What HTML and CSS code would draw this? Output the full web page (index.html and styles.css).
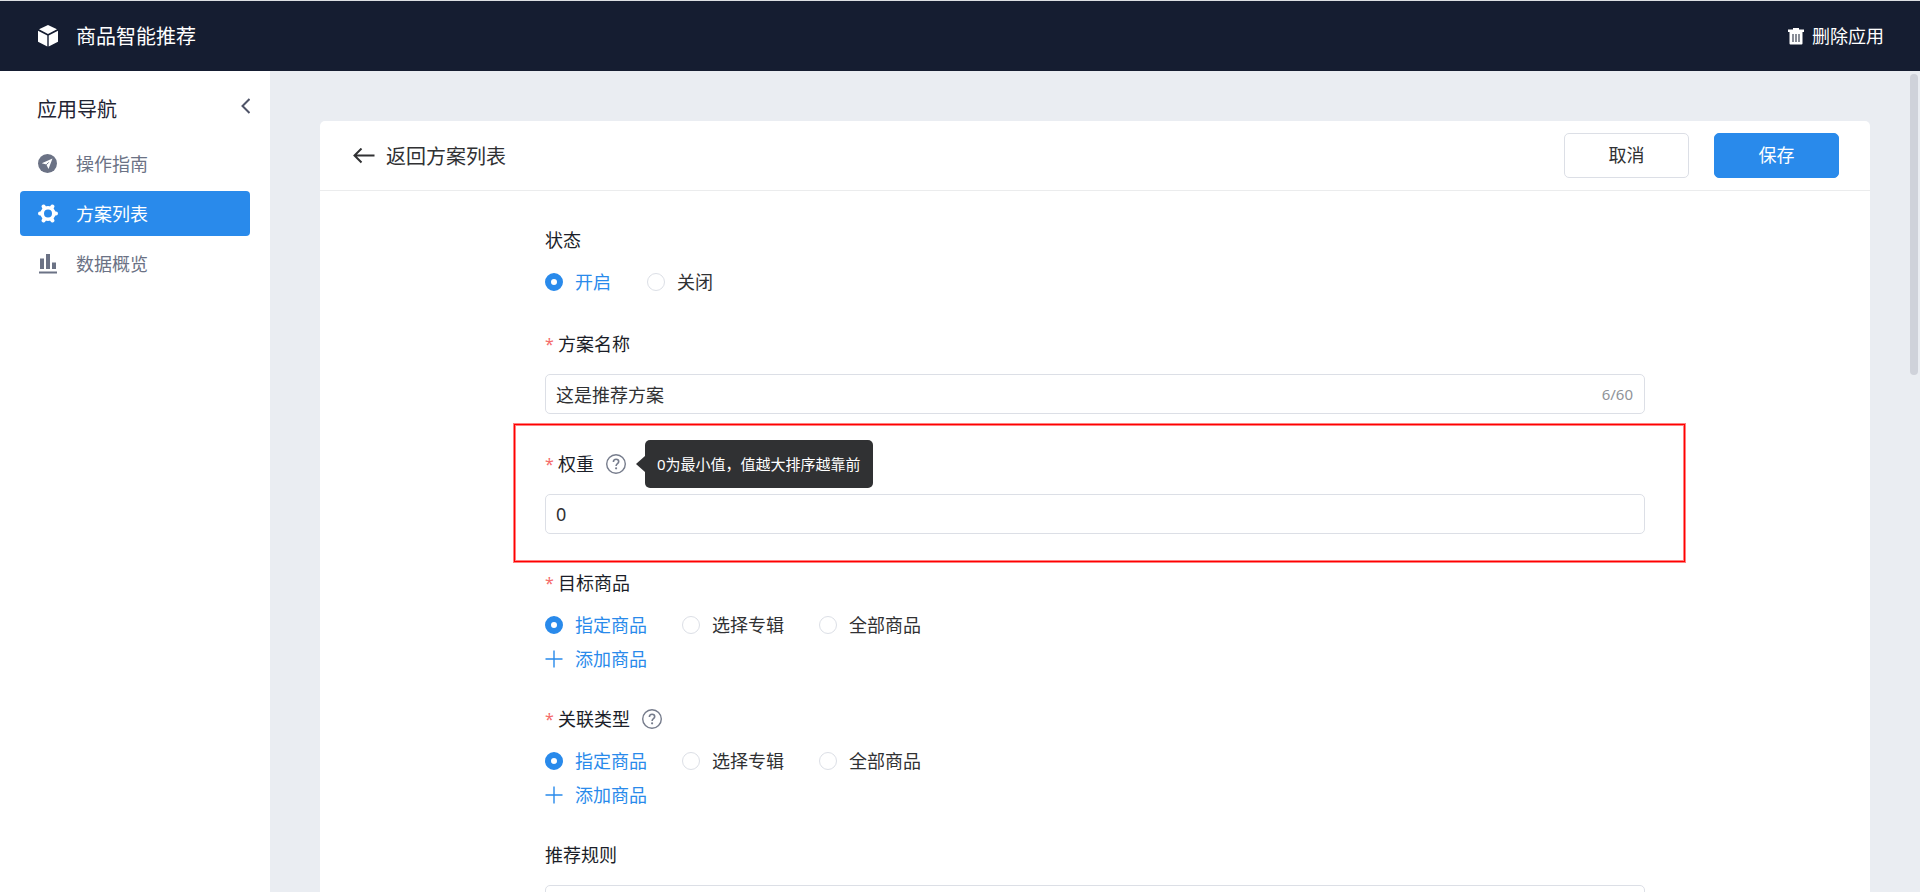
FILE: index.html
```html
<!DOCTYPE html>
<html lang="zh-CN">
<head>
<meta charset="utf-8">
<title>商品智能推荐</title>
<link rel="stylesheet" href="styles.css">
</head>
<body>
<header class="topbar">
  <div class="brand">
    <svg class="icon" viewBox="0 0 20 22" aria-hidden="true"><path fill="#fff" d="M10 0 19 4.200 10 9 1 4.200zM0 5.800 9.300 10.600V21.500L0 16.800zM20 5.800 10.700 10.600V21.500L20 16.800z"/></svg>
    <h1 class="brand-name">商品智能推荐</h1>
  </div>
  <button class="delete" type="button">
    <svg class="trash" viewBox="0 0 16 17" aria-hidden="true"><path fill="#fff" fill-rule="evenodd" d="M5 0h6v1.500h5V4h-1.500v11.500a1 1 0 0 1-1 1h-11a1 1 0 0 1-1-1V4H0V1.500h5zM4.500 6v8h1V6zM7.500 6v8h1V6zM10.500 6v8h1V6z"/></svg>
    删除应用
  </button>
</header>
<div class="shell">
  <aside class="sidebar">
    <div class="sidebar-head">
      <h2 class="sidebar-title">应用导航</h2>
      <button class="collapse" type="button" aria-label="收起导航">
        <svg class="chevron" viewBox="0 0 10 16" aria-hidden="true"><path d="M9.500 1 2.500 8l7 7" fill="none" stroke="#4f5468" stroke-width="2"/></svg>
      </button>
    </div>
    <nav class="nav">
      <a class="nav-item" href="#guide">
        <svg class="icon" viewBox="0 0 20 20" aria-hidden="true"><circle cx="9.500" cy="9.500" r="9.500" fill="#6b7285"/><path fill="#fff" d="M14.500 4.500 3.800 9.300l4.500 1.300 2.200 4.500z"/><path d="M8.300 10.800 10.700 8.400" stroke="#6b7285" stroke-width="1"/></svg>
        操作指南
      </a>
      <a class="nav-item nav-item--active" href="#plans" aria-current="page">
        <svg class="icon" viewBox="0 0 20 20" aria-hidden="true"><circle cx="10" cy="9.500" r="5.800" fill="none" stroke="#fff" stroke-width="3.600"/><path fill="none" stroke="#fff" stroke-width="4" stroke-linecap="round" d="M6 3.200 5.600 2.500M14 3.200l.4-.7M17 9.500h1M3 9.500H2M6 15.800l-.4.700M14 15.800l.4.700"/></svg>
        方案列表
      </a>
      <a class="nav-item" href="#data">
        <svg class="icon" viewBox="0 0 20 20" aria-hidden="true"><path fill="#6b7285" d="M2 4.500h4V15H2zM8 0h4v15H8zM14 8.500h4V15h-4zM1 17.500h18v2H1z"/></svg>
        数据概览
      </a>
    </nav>
  </aside>
  <main class="content">
    <section class="card">
      <div class="card-head">
        <a class="back" href="#plans">
          <svg class="arrow" viewBox="0 0 22 16" aria-hidden="true"><path d="M21.500 7.500H1.500M8.500 .500l-7 7 7 7" fill="none" stroke="#303133" stroke-width="2"/></svg>
          <span class="back-text">返回方案列表</span>
        </a>
        <div class="actions">
          <button class="btn" type="button">取消</button>
          <button class="btn btn--primary" type="submit" form="plan">保存</button>
        </div>
      </div>
      <form class="form" id="plan">
        <div class="field" role="radiogroup" aria-labelledby="l-state">
          <div class="label" id="l-state">状态</div>
          <div class="radios">
            <label class="radio"><input type="radio" name="state" checked><span>开启</span></label>
            <label class="radio"><input type="radio" name="state"><span>关闭</span></label>
          </div>
        </div>
        <div class="field field--input">
          <div class="label"><span class="star">*</span><label for="name">方案名称</label></div>
          <div class="box">
            <input class="text" id="name" type="text" maxlength="60" value="这是推荐方案">
            <span class="count">6/60</span>
          </div>
        </div>
        <div class="field field--input field--marked">
          <div class="label">
            <span class="star">*</span><label for="weight">权重</label>
            <span class="help">
              <svg class="help-icon" viewBox="0 0 20 20" aria-hidden="true"><circle cx="10" cy="10" r="9.300" fill="none" stroke="#767c8c" stroke-width="1.400"/><path d="M7.400 8c0-1.700 1.100-2.700 2.700-2.700s2.600 1 2.600 2.400c0 1.900-2.600 2-2.600 4.200" fill="none" stroke="#767c8c" stroke-width="1.600"/><circle cx="10.100" cy="14.300" r="1.100" fill="#767c8c"/></svg>
              <span class="tooltip" role="tooltip">0为最小值，值越大排序越靠前</span>
            </span>
          </div>
          <div class="box"><input class="text" id="weight" type="text" value="0"></div>
        </div>
        <div class="field field--picker" role="radiogroup" aria-labelledby="l-target">
          <div class="label" id="l-target"><span class="star">*</span>目标商品</div>
          <div class="radios">
            <label class="radio"><input type="radio" name="target" checked><span>指定商品</span></label>
            <label class="radio"><input type="radio" name="target"><span>选择专辑</span></label>
            <label class="radio"><input type="radio" name="target"><span>全部商品</span></label>
          </div>
          <button class="add" type="button"><svg class="plus" viewBox="0 0 18 18" aria-hidden="true"><path d="M9 .500v17M.500 9h17" stroke="#298aeb" stroke-width="1.400"/></svg>添加商品</button>
        </div>
        <div class="field field--picker" role="radiogroup" aria-labelledby="l-related">
          <div class="label" id="l-related">
            <span class="star">*</span>关联类型
            <span class="help"><svg class="help-icon" viewBox="0 0 20 20" aria-hidden="true"><circle cx="10" cy="10" r="9.300" fill="none" stroke="#767c8c" stroke-width="1.400"/><path d="M7.400 8c0-1.700 1.100-2.700 2.700-2.700s2.600 1 2.600 2.400c0 1.900-2.600 2-2.600 4.200" fill="none" stroke="#767c8c" stroke-width="1.600"/><circle cx="10.100" cy="14.300" r="1.100" fill="#767c8c"/></svg></span>
          </div>
          <div class="radios">
            <label class="radio"><input type="radio" name="related" checked><span>指定商品</span></label>
            <label class="radio"><input type="radio" name="related"><span>选择专辑</span></label>
            <label class="radio"><input type="radio" name="related"><span>全部商品</span></label>
          </div>
          <button class="add" type="button"><svg class="plus" viewBox="0 0 18 18" aria-hidden="true"><path d="M9 .500v17M.500 9h17" stroke="#298aeb" stroke-width="1.400"/></svg>添加商品</button>
        </div>
        <div class="field field--input">
          <div class="label"><label for="rule">推荐规则</label></div>
          <div class="box"><input class="text" id="rule" type="text"></div>
        </div>
      </form>
    </section>
    <div class="scroll-thumb"></div>
  </main>
</div>
</body>
</html>
```

FILE: styles.css
```css
* {
  box-sizing: border-box;
}

body {
  margin: 0;
  height: 100vh;
  display: flex;
  flex-direction: column;
  overflow: hidden;
  border-top: 1px solid #dcdfe3;
  font: 400 18px/30px "Noto Sans", "Noto Sans CJK SC", sans-serif;
  color: #303133;
  background: #fff;
}

button,
input {
  font: inherit;
  color: inherit;
}

button {
  padding: 0;
  border: 0;
  background: none;
  cursor: pointer;
}

a {
  color: inherit;
  text-decoration: none;
}

svg {
  display: block;
  flex: none;
}

.topbar {
  flex: none;
  height: 70px;
  padding: 0 36px 0 38px;
  display: flex;
  align-items: center;
  justify-content: space-between;
  color: #fff;
  background: #151d31;
}

.brand {
  display: flex;
  align-items: center;
  gap: 18px;
}

.brand-name,
.sidebar-title {
  margin: 0;
  padding-top: 2px;
  font-size: 20px;
  font-weight: inherit;
}

.icon {
  width: 20px;
  height: 20px;
}

.brand .icon {
  height: 22px;
}

.delete {
  display: flex;
  align-items: center;
  gap: 8px;
}

.trash {
  width: 16px;
  height: 17px;
}

.shell {
  flex: 1;
  min-height: 0;
  display: flex;
}

.sidebar {
  flex: none;
  width: 270px;
  padding: 22px 20px;
  color: #1f2433;
}

.sidebar-head {
  display: flex;
  justify-content: space-between;
  padding: 0 0 0 17px;
  margin-bottom: 16px;
}

.collapse {
  height: 26px;
}

.chevron {
  width: 10px;
  height: 16px;
}

.nav {
  display: flex;
  flex-direction: column;
  gap: 5px;
}

.nav-item {
  height: 45px;
  padding-left: 18px;
  display: flex;
  align-items: center;
  gap: 18px;
  border-radius: 4px;
  color: #6b7285;
}

.nav-item--active {
  color: #fff;
  background: #298aeb;
}

.content {
  position: relative;
  flex: 1;
  min-width: 0;
  overflow: hidden;
  padding: 50px 50px 0;
  background: #eaedf2;
}

.card {
  border-radius: 5px;
  background: #fff;
}

.card-head {
  height: 70px;
  padding: 0 31px 0 33px;
  display: flex;
  align-items: center;
  justify-content: space-between;
  border-bottom: 1px solid #ebeced;
}

.back {
  display: flex;
  align-items: center;
  gap: 11px;
  font-size: 20px;
}

.back-text {
  padding-top: 2px;
}

.arrow {
  width: 22px;
  height: 16px;
}

.actions {
  display: flex;
  gap: 25px;
}

.btn {
  width: 125px;
  height: 45px;
  padding-bottom: 2px;
  border: 1px solid #dcdfe6;
  border-radius: 5px;
  background: #fff;
}

.btn--primary {
  border-color: #298aeb;
  color: #fff;
  background: #298aeb;
}

.form {
  max-width: 1100px;
  margin: 0 auto;
  padding: 24px 0;
}

.field {
  margin-bottom: 22px;
}

.field--input {
  margin-bottom: 25px;
}

.field--picker {
  margin-bottom: 20px;
}

.field--marked {
  position: relative;
  margin-bottom: 24px;
}

.field--marked::after {
  content: "";
  position: absolute;
  inset: -15px -40px -28px -31px;
  border: 1px solid #f00;
  box-shadow: 0 0 0 1px #ff8080, inset 0 0 0 1px #ff8080;
  pointer-events: none;
}

.label {
  height: 50px;
  display: flex;
  align-items: center;
  color: #1b1e28;
}

.star {
  width: 13px;
  font-size: 16px;
  color: #f56c6c;
}

.help {
  position: relative;
  margin-left: 12px;
}

.help-icon {
  width: 20px;
  height: 20px;
}

.tooltip {
  position: absolute;
  left: 39px;
  top: 50%;
  transform: translateY(-50%);
  padding: 9px 12px;
  border-radius: 5px;
  font-size: 15px;
  white-space: nowrap;
  color: #fff;
  background: #303133;
}

.tooltip::before {
  content: "";
  position: absolute;
  right: 100%;
  top: 16px;
  border: 8px solid transparent;
  border-right-width: 9px;
  border-left-width: 0;
  border-right-color: #303133;
}

.box {
  height: 40px;
  margin-top: 5px;
  padding: 0 11px 0 10px;
  display: flex;
  align-items: center;
  border: 1px solid #dcdfe6;
  border-radius: 5px;
}

.text {
  flex: 1;
  min-width: 0;
  height: 38px;
  padding: 0;
  border: 0;
  outline: 0;
  background: none;
}

.count {
  font-size: 15px;
  color: #909399;
}

.radios {
  margin-top: 2px;
  display: flex;
  gap: 36px;
}

.field--picker .radios {
  gap: 35px;
}

.radio {
  display: flex;
  align-items: center;
  gap: 12px;
}

.radio input {
  appearance: none;
  width: 18px;
  height: 18px;
  margin: 0;
  border: 1px solid #dcdfe6;
  border-radius: 50%;
  background: #fff;
}

.radio input:checked {
  border: 6px solid #298aeb;
}

.radio input:checked + span {
  color: #298aeb;
}

.add {
  height: 30px;
  margin-top: 4px;
  display: flex;
  align-items: center;
  gap: 12px;
  color: #298aeb;
}

.plus {
  width: 18px;
  height: 18px;
}

.scroll-thumb {
  position: absolute;
  top: 3px;
  right: 2px;
  width: 8px;
  height: 301px;
  border-radius: 4px;
  background: #cfd2da;
}
```
